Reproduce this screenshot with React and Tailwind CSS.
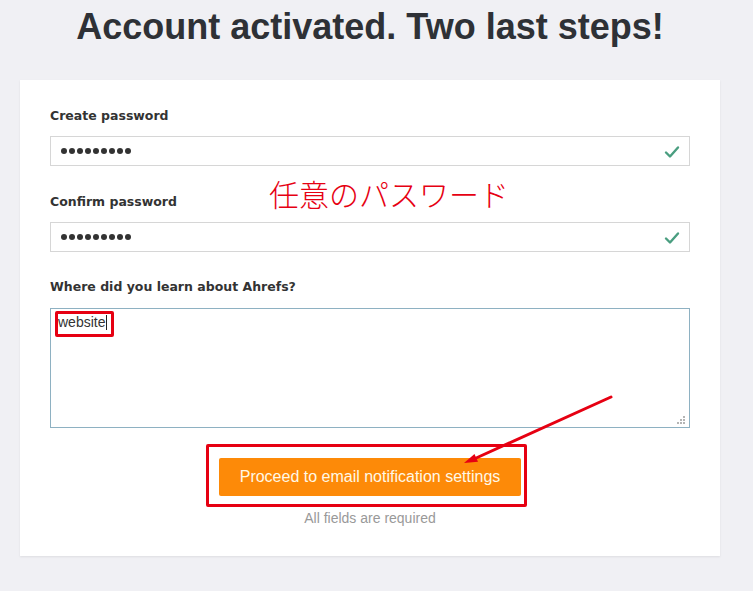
import React from 'react';

const Dots = () => (
  <div className="flex items-center gap-[2px]">
    {Array.from({ length: 9 }).map((_, i) => (
      <span key={i} className="block h-[6px] w-[6px] rounded-full bg-[#333]" />
    ))}
  </div>
);

const Check = () => (
  <svg className="absolute right-[9px] top-[8px]" width="16" height="14" viewBox="0 0 16 14">
    <path d="M2 7.5 L6 11.5 L14 2.5" fill="none" stroke="#4a9e80" strokeWidth="2.4" strokeLinecap="round" strokeLinejoin="round" />
  </svg>
);

const PasswordField = ({ label, className }) => (
  <div className={className}>
    <label className="block h-4 text-[12.5px] leading-4 font-bold text-[#333] font-['DejaVu_Sans',sans-serif] mb-3">
      {label}
    </label>
    <div className="relative flex h-[30px] items-center border border-[#d6d6d6] bg-white pl-[10px]">
      <Dots />
      <Check />
    </div>
  </div>
);

export default function App() {
  return (
    <div className="relative min-h-screen bg-[#f0f0f4] font-['Liberation_Sans',Arial,sans-serif]">
      <div className="w-[740px] pt-[5px]">
        <h1 className="text-center text-[36px] leading-[43px] font-bold text-[#2e3136]">
          Account activated. Two last steps!
        </h1>

        <div className="ml-5 mt-8 w-[700px] bg-white px-[30px] pt-7 pb-[30px] shadow-[0_1px_2px_rgba(0,0,0,0.08)]">
          <PasswordField label="Create password" />
          <PasswordField label="Confirm password" className="mt-7" />

          <div className="mt-[27px]">
            <label className="block h-4 text-[12.5px] leading-4 font-bold text-[#333] font-['DejaVu_Sans',sans-serif] mb-[13px]">
              Where did you learn about Ahrefs?
            </label>
            <div className="relative h-[120px] border border-[#8eb1c2] bg-white px-[7px] pt-[1px]">
              <span className="relative inline-flex items-center text-[14px] leading-5 text-[#333]">
                website
                <span className="ml-[1px] inline-block h-[15px] w-px bg-[#222]" />
                <span className="absolute -left-[3px] -top-[1px] h-[26px] w-[59px] rounded-[2px] border-[3px] border-[#e60012]" />
              </span>
              <svg className="absolute bottom-[3px] right-[3px]" width="9" height="8" viewBox="0 0 9 8">
                <g fill="#b5b5b5">
                  <rect x="6" y="0" width="2" height="2" />
                  <rect x="3" y="3" width="2" height="2" />
                  <rect x="6" y="3" width="2" height="2" />
                  <rect x="0" y="6" width="2" height="2" />
                  <rect x="3" y="6" width="2" height="2" />
                  <rect x="6" y="6" width="2" height="2" />
                </g>
              </svg>
            </div>
          </div>

          <div className="mt-[30px] flex justify-center">
            <div className="relative">
              <button className="h-[38px] w-[302px] rounded-[2px] bg-[#fd8a08] text-[16px] text-[#fff8e6]">
                Proceed to email notification settings
              </button>
              <span className="absolute -left-[13px] -top-[14px] h-[63px] w-[321px] rounded-[2px] border-[3px] border-[#e60012]" />
            </div>
          </div>

          <p className="mt-[14px] text-center text-[14px] leading-4 text-[#999]">All fields are required</p>
        </div>
      </div>

      <span className="absolute left-[269px] top-[178px] text-[30px] leading-[30px] font-light text-[#e60012] font-['Noto_Sans_CJK_JP',sans-serif]">
        任意のパスワード
      </span>

      <svg className="pointer-events-none absolute left-0 top-0" width="753" height="591">
        <line x1="611" y1="397" x2="474" y2="459" stroke="#e60012" strokeWidth="3" strokeLinecap="round" />
        <polygon points="464,463 478,461.8 474.5,454" fill="#e60012" />
      </svg>
    </div>
  );
}
